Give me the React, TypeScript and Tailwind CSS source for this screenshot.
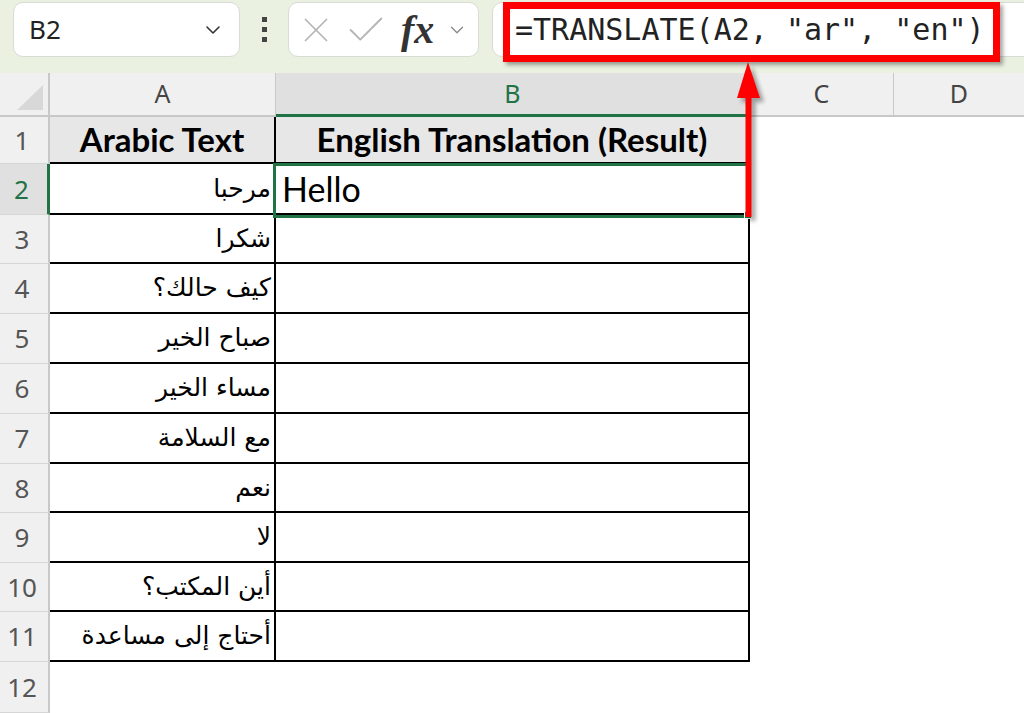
import React from 'react';
import { ChevronDown, X, Check } from 'lucide-react';

const rows = [
  { ar: 'Arabic Text', en: 'English Translation (Result)', h: 'h-[47px]' },
  { ar: 'مرحبا', en: 'Hello', h: 'h-[51px]' },
  { ar: 'شكرا', en: '', h: 'h-[49px]' },
  { ar: 'كيف حالك؟', en: '', h: 'h-[50px]' },
  { ar: 'صباح الخير', en: '', h: 'h-[50px]' },
  { ar: 'مساء الخير', en: '', h: 'h-[50px]' },
  { ar: 'مع السلامة', en: '', h: 'h-[50px]' },
  { ar: 'نعم', en: '', h: 'h-[49px]' },
  { ar: 'لا', en: '', h: 'h-[50px]' },
  { ar: 'أين المكتب؟', en: '', h: 'h-[49px]' },
  { ar: 'أحتاج إلى مساعدة', en: '', h: 'h-[50px]' },
];

const uiFont = "font-['Noto_Sans','Open_Sans',sans-serif]";

export default function App() {
  return (
    <div className="relative w-[1024px] h-[713px] overflow-hidden bg-white">
      {/* Formula bar */}
      <div className="flex h-[73px] items-start bg-[#eaf1e1] pl-[13px] pt-[2px]">
        <div className="flex h-[55px] w-[227px] items-center justify-between rounded-[10px] border border-[#d9dcd5] bg-white pl-[15px] pr-[14px]">
          <span className={`${uiFont} text-[26px] text-[#222]`}>B2</span>
          <ChevronDown size={24} strokeWidth={1.6} className="text-[#333]" />
        </div>
        <div className="flex h-[55px] w-[48px] flex-col items-center justify-center gap-[5px]">
          <span className="h-[5px] w-[5px] bg-[#444]" />
          <span className="h-[5px] w-[5px] bg-[#444]" />
          <span className="h-[5px] w-[5px] bg-[#444]" />
        </div>
        <div className="flex h-[55px] w-[191px] items-center rounded-[10px] border border-[#d9dcd5] bg-white pl-[6px]">
          <X size={42} strokeWidth={1} className="text-[#b5b5b5]" />
          <Check size={46} strokeWidth={1} className="ml-[6px] text-[#b5b5b5]" />
          <span className="ml-[12px] font-['Liberation_Serif',serif] text-[40px] italic font-semibold leading-none text-[#333]">fx</span>
          <ChevronDown size={22} strokeWidth={1.4} className="ml-[12px] text-[#888]" />
        </div>
        <div className="ml-[13px] flex h-[55px] flex-1 -mr-[20px] items-center rounded-[10px] border border-[#d9dcd5] bg-white pl-[22px]">
          <span className="font-['DejaVu_Sans_Mono',monospace] text-[30px] text-[#222] whitespace-pre">=TRANSLATE(A2, "ar", "en")</span>
        </div>
      </div>

      {/* Column headers */}
      <div className={`flex h-[44px] bg-[#f0f0f0] ${uiFont} text-[25px] text-[#444]`}>
        <div className="relative w-[50px] border-r-2 border-b-2 border-[#c8c8c8]">
          <svg className="absolute left-[17px] top-[12px]" width="26" height="25" viewBox="0 0 26 25">
            <polygon points="26,0 26,25 0,25" fill="#d8d8d8" />
          </svg>
        </div>
        <div className="flex w-[226px] items-center justify-center border-r border-b-2 border-[#c8c8c8]">A</div>
        <div className="flex w-[474px] items-center justify-center border-r border-[#c8c8c8] border-b-[3px] border-b-[#217346] bg-[#e0e0e0] text-[#217346]">B</div>
        <div className="flex w-[144px] items-center justify-center border-r border-b-2 border-[#c8c8c8]">C</div>
        <div className="flex flex-1 items-center justify-center border-b-2 border-[#c8c8c8]">D</div>
      </div>

      {/* Rows */}
      {rows.map((r, i) => {
        const head = i === 0;
        const sel = i === 1;
        return (
          <div key={i} className={`flex ${r.h}`}>
            <div
              className={`flex w-[50px] items-center justify-center border-b border-[#d6d6d6] pr-[4px] ${uiFont} text-[26px] ${
                sel ? 'bg-[#e0e0e0] text-[#217346] border-r-[3px] border-r-[#217346]' : 'bg-[#f0f0f0] text-[#555] border-r-2 border-r-[#c8c8c8]'
              }`}
            >
              {i + 1}
            </div>
            <div
              className={`flex w-[226px] items-center border-r-2 border-b-2 border-black ${
                head
                  ? "justify-center bg-[#e7e7e7] font-['Lato',sans-serif] text-[33px] font-bold text-black"
                  : "justify-end pr-[3px] font-['DejaVu_Sans',sans-serif] text-[25px] text-black"
              }`}
            >
              <span dir={head ? 'ltr' : 'rtl'}>{r.ar}</span>
            </div>
            <div
              className={`flex w-[474px] items-center border-r-2 border-b-2 border-black ${
                head
                  ? "justify-center bg-[#e7e7e7] font-['Lato',sans-serif] text-[33px] font-bold text-black"
                  : "pl-[6px] font-['Lato',sans-serif] text-[34px] text-black"
              }`}
            >
              {r.en}
            </div>
          </div>
        );
      })}
      <div className="flex h-[51px]">
        <div className={`flex w-[50px] items-center justify-center border-r-2 border-b border-[#c8c8c8] border-b-[#d6d6d6] bg-[#f0f0f0] pr-[4px] ${uiFont} text-[26px] text-[#555]`}>
          12
        </div>
      </div>

      {/* Selected cell B2 */}
      <div className="absolute left-[273px] top-[163px] h-[55px] w-[478px] border-[3px] border-[#217346]" />
      <div className="absolute left-[744px] top-[211px] h-[8px] w-[8px] border border-white bg-[#217346]" />

      {/* Annotation: red frame */}
      <div className="absolute left-[503px] top-[2px] h-[60px] w-[497px] border-[7px] border-[#ff0000] shadow-[3px_3px_4px_rgba(0,0,0,0.35)]" />

      {/* Annotation: arrow */}
      <svg className="absolute left-[730px] top-[55px]" width="44" height="172" viewBox="0 0 44 172">
        <defs>
          <filter id="sh" x="-50%" y="-10%" width="200%" height="120%">
            <feGaussianBlur stdDeviation="2" />
          </filter>
        </defs>
        <g transform="translate(4,4)" fill="#000" opacity="0.35" filter="url(#sh)">
          <polygon points="18,7 7,43 30,43" />
          <rect x="15.5" y="40" width="6" height="122" />
        </g>
        <polygon points="18,7 7,43 30,43" fill="#ff0000" />
        <rect x="15.5" y="40" width="6" height="122" fill="#ff0000" />
      </svg>
    </div>
  );
}
